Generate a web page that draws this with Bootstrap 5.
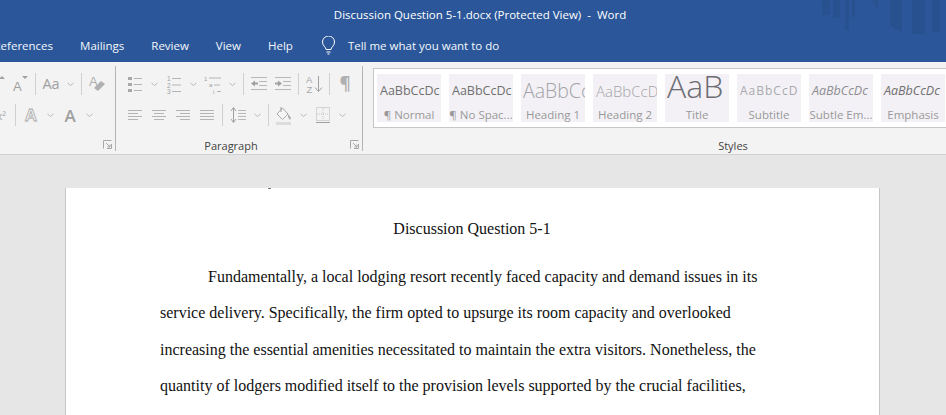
<!DOCTYPE html>
<html lang="en">
<head>
  <meta charset="UTF-8" />
  <title>Discussion Question 5-1.docx (Protected View) - Word</title>
  <link href="https://cdn.jsdelivr.net/npm/bootstrap@5.3.0/dist/css/bootstrap.min.css" rel="stylesheet"/>
  <style>
    html, body { height: 415px; overflow: hidden; }
    body { font-family: "Open Sans", "Noto Sans", sans-serif; background: #e6e6e6; }
    .word-top { background: #2b579a; color: #fff; height: 62px; }
    .title-line { height: 30px; font-size: 11.5px; padding-left: 14px; }
    .watermark { top: 0; right: 0; }
    .tab-line { height: 32px; font-size: 11.5px; margin-left: -20px; }
    .tab-item { padding: 0 13.5px; color: #f4f7fb; }
    .tell-me { margin-left: 15px; gap: 11.5px; color: #f4f7fb; }
    .ribbon-bar { height: 93px; background: #f3f3f3; border-bottom: 1px solid #d2d2d2; overflow: hidden; }
    .rb-group { margin: 4px 0 3px; border-right: 1px solid #b4b4b4; flex: none; }
    .rb-font { width: 116px; }
    .rb-para { width: 247px; }
    .rb-styles { border-right: 0; margin-left: 10px; width: 720px; }
    .tool-row { height: 22px; margin-top: 7px; }
    .tool-row + .tool-row { margin-top: 9px; }
    .tools-end { justify-content: flex-end; padding-right: 6px; }
    .tools-end2 { padding-right: 18px; }
    .tools-start { padding-left: 7px; }
    .rb-tool { width: 24px; flex: none; color: #a8a8a8; }
    .rb-drop { width: 15px; flex: none; }
    .rb-sep { width: 1px; height: 22px; background: #d0d0d0; margin: 0 3px; flex: none; }
    .rb-label { height: 18px; margin-top: auto; margin-bottom: -4px; font-size: 11px; color: #444; line-height: 18px; }
    .para-label { padding-right: 16px; }
    .launcher { right: 3px; bottom: 2px; }
    .txt-tool { font-size: 14.5px; color: #a0a0a0; line-height: 1; }
    .sup-tool { font-size: 11px; padding-right: 6px; }
    .big-a { font-size: 17px; font-weight: 600; }
    .pil-tool { font-size: 17px; font-weight: 700; color: #b0b0b0; }
    .gallery { margin-top: 2px; height: 60px; background: #fff; border: 1px solid #c6c6c6; border-right: 0; padding: 5px 3px; gap: 8px; }
    .style-tile { width: 64px; height: 48px; flex: none; background: #f3f1f5; overflow: hidden; }
    .tile-prev { height: 32px; white-space: nowrap; overflow: hidden; font-size: 12.5px; color: #6f6f6f; line-height: 34px; padding-left: 3px; }
    .tile-name { font-size: 11.5px; color: #999; line-height: 17px; white-space: nowrap; }
    .prev-h1 { font-size: 19.5px; font-weight: 300; color: #a3a3a8; padding-left: 2px; }
    .prev-h2 { font-size: 15px; font-weight: 300; color: #a3a3a8; padding-left: 3px; }
    .prev-title { font-size: 32px; font-weight: 300; color: #6c6c72; line-height: 23px; padding-left: 2px; }
    .prev-sub { letter-spacing: 1px; color: #a9a9ae; font-size: 12px; }
    .prev-em { font-style: italic; color: #8d8d92; }
    .prev-emph { font-style: italic; color: #6f6f6f; }
    .doc-area { padding-top: 33px; }
    .doc-page { margin-left: 65px; width: 815px; height: 227px; background: #fff; border: solid #c6c6c6; border-width: 0 1px; padding: 23px 95px 0 94px; font-family: "Liberation Serif", "Times New Roman", serif; font-size: 16px; line-height: 36.6px; color: #111; overflow: hidden; }
    .doc-title { margin: 0 0 11px; }
    .doc-para { text-indent: 48px; margin: 0; }
    .cut-mark { top: 0; left: 202px; width: 3px; height: 1px; background: #777; }
  </style>
</head>
<body>
  <!-- icons used by the ribbon -->
  <svg class="d-none">
    <symbol id="i-chev" viewBox="0 0 15 22"><path d="M4.5 10l3 2.5 3-2.5" fill="none" stroke="#b8b8b8"/></symbol>
    <symbol id="i-grow" viewBox="0 0 24 22">
      <text x="5" y="18" font-family="Liberation Sans" font-size="14" fill="#a0a0a0">A</text>
      <path d="M15 6l3-3 3 3z" fill="#a0a0a0"/>
    </symbol>
    <symbol id="i-shrink" viewBox="0 0 24 22">
      <text x="5" y="18" font-family="Liberation Sans" font-size="13" fill="#a0a0a0">A</text>
      <path d="M14 3h6l-3 3z" fill="#a0a0a0"/>
    </symbol>
    <symbol id="i-bul" viewBox="0 0 24 22" fill="#a8a8a8">
      <rect x="5" y="4" width="4" height="3"/><rect x="5" y="10" width="4" height="3"/><rect x="5" y="16" width="4" height="3"/>
      <path d="M11 5.5h8M11 11.5h8M11 17.5h8" stroke="#b4b4b4" fill="none"/>
    </symbol>
    <symbol id="i-num" viewBox="0 0 24 22">
      <g font-family="Liberation Sans" font-size="6.5" fill="#a0a0a0"><text x="5" y="8">1</text><text x="5" y="14.5">2</text><text x="5" y="21">3</text></g>
      <path d="M10 5.5h9M10 12h9M10 18.5h9" stroke="#b4b4b4" fill="none"/>
    </symbol>
    <symbol id="i-multi" viewBox="0 0 24 22">
      <g font-family="Liberation Sans" font-size="6" fill="#a0a0a0"><text x="3" y="8">1</text><text x="8" y="14">a</text><text x="12" y="20.5">i</text></g>
      <path d="M8 5h12M13 12h6M16 18.5h4" stroke="#b4b4b4" fill="none"/>
    </symbol>
    <symbol id="i-out" viewBox="0 0 24 22">
      <path d="M4 4.500h16M12 8.500h8M12 12.500h8M4 16.500h16" stroke="#b8b8b8" fill="none"/>
      <path d="M4 10.500l4-3v2h3v2H8v2z" fill="#a0a0a0"/>
    </symbol>
    <symbol id="i-in" viewBox="0 0 24 22">
      <path d="M4 4.500h16M12 8.500h8M12 12.500h8M4 16.500h16" stroke="#b8b8b8" fill="none"/>
      <path d="M11 10.500l-4-3v2H4v2h3v2z" fill="#a0a0a0"/>
    </symbol>
    <symbol id="i-sort" viewBox="0 0 24 22">
      <g font-family="Liberation Sans" font-size="9.500" fill="#a8a8a8"><text x="4" y="10">A</text><text x="4.500" y="20">Z</text></g>
      <path d="M16.500 3v15M13 14.500l3.500 4 3.500-4" stroke="#a0a0a0" fill="none"/>
    </symbol>
    <symbol id="i-left" viewBox="0 0 24 22"><path d="M5 6.500h14M5 9.500h10M5 12.500h14M5 15.500h10" stroke="#b4b4b4" fill="none"/></symbol>
    <symbol id="i-mid" viewBox="0 0 24 22"><path d="M5 6.500h14M7 9.500h10M5 12.500h14M7 15.500h10" stroke="#b4b4b4" fill="none"/></symbol>
    <symbol id="i-right" viewBox="0 0 24 22"><path d="M5 6.500h14M9 9.500h10M5 12.500h14M9 15.500h10" stroke="#b4b4b4" fill="none"/></symbol>
    <symbol id="i-just" viewBox="0 0 24 22"><path d="M5 6.500h14M5 9.500h14M5 12.500h14M5 15.500h14" stroke="#b4b4b4" fill="none"/></symbol>
    <symbol id="i-space" viewBox="0 0 24 22">
      <path d="M7.500 4v14M5 7l2.500-3.500L10 7M5 15l2.500 3.500L10 15" stroke="#a0a0a0" fill="none"/>
      <path d="M12 6.500h8M12 9.500h8M12 12.500h8M12 15.500h8" stroke="#b8b8b8" fill="none"/>
    </symbol>
    <symbol id="i-shade" viewBox="0 0 24 22">
      <path d="M10.500 4l-5.500 6 5.500 5.500L16 10z" fill="#f6f6f6" stroke="#a8a8a8"/>
      <path d="M16 10l3 4-1 2-2-3z" fill="#a8a8a8"/>
      <path d="M9 3v5" stroke="#a0a0a0"/>
      <rect x="4" y="18" width="15" height="3" fill="#dcdcdc"/>
    </symbol>
    <symbol id="i-bord" viewBox="0 0 24 22">
      <rect x="5.500" y="3.500" width="13" height="13" fill="none" stroke="#b4b4b4" stroke-dasharray="1 1"/>
      <path d="M12 4v12M6 10h12" stroke="#c4c4c4" stroke-dasharray="1 1"/>
      <path d="M5 18.500h14" stroke="#a0a0a0"/>
    </symbol>
    <symbol id="i-erase" viewBox="0 0 24 22">
      <text x="4" y="13" font-family="Liberation Sans" font-size="13" fill="#b0b0b0">A</text>
      <path d="M9 15l7-7 4 3-7 7z" fill="#b0b0b0"/>
    </symbol>
    <symbol id="i-launch" viewBox="0 0 9 9">
      <path d="M.5 8.500v-8h8M8.500 4v4.500H4M3 3l4 4M7 4.500V7H4.500" fill="none" stroke="#a8a8a8"/>
    </symbol>
  </svg>

  <!-- title + tabs -->
  <div class="word-top position-relative">
    <svg class="watermark position-absolute" width="124" height="36" viewBox="0 0 124 36">
      <g fill="#285190">
        <rect x="0" width="8" height="15"/><rect x="11" width="7" height="18"/><rect x="23" width="4" height="30"/>
        <rect x="30" width="3" height="17"/><path d="M50 0h6v10z"/><path d="M68 0h12v32l-12-6z"/>
        <rect x="90" width="13" height="34"/><rect x="110" width="8" height="32"/>
      </g>
    </svg>
    <div class="title-line d-flex align-items-center position-relative">
      <span class="title-text mx-auto text-nowrap">Discussion Question 5-1.docx (Protected View)&nbsp; - &nbsp;Word</span>
    </div>
    <div class="tab-line d-flex align-items-center position-relative text-nowrap">
      <span class="tab-item">References</span>
      <span class="tab-item">Mailings</span>
      <span class="tab-item">Review</span>
      <span class="tab-item">View</span>
      <span class="tab-item">Help</span>
      <span class="tell-me d-flex align-items-center">
        <svg width="15" height="20" viewBox="0 0 15 20"><path d="M5 13.500c0-2.500-3.500-3.500-3.500-7.500a6 6 0 0 1 12 0c0 4-3.500 5-3.500 7.500zM5.500 16h4M6.500 18h2" fill="none" stroke="#fff"/></svg>
        <span>Tell me what you want to do</span>
      </span>
    </div>
  </div>

  <!-- ribbon -->
  <div class="ribbon-bar d-flex">
    <div class="rb-group rb-font d-flex flex-column position-relative">
      <div class="tool-row d-flex align-items-center tools-end">
        <svg class="rb-tool" height="22"><use href="#i-grow"/></svg>
        <svg class="rb-tool" height="22"><use href="#i-shrink"/></svg>
        <span class="rb-sep"></span>
        <span class="rb-tool txt-tool text-center">Aa</span>
        <svg class="rb-drop" height="22"><use href="#i-chev"/></svg>
        <span class="rb-sep"></span>
        <svg class="rb-tool" height="22"><use href="#i-erase"/></svg>
      </div>
      <div class="tool-row d-flex align-items-center tools-end tools-end2">
        <span class="rb-tool txt-tool sup-tool text-end">x²</span>
        <span class="rb-sep"></span>
        <svg class="rb-tool" height="22" viewBox="0 0 24 22"><text x="12" y="17" text-anchor="middle" font-family="Liberation Sans" font-weight="700" font-size="17" fill="#f6f6f6" stroke="#a8a8a8" stroke-width=".8">A</text></svg>
        <svg class="rb-drop" height="22"><use href="#i-chev"/></svg>
        <span class="rb-tool txt-tool big-a text-center">A</span>
        <svg class="rb-drop" height="22"><use href="#i-chev"/></svg>
      </div>
      <svg class="launcher position-absolute" width="9" height="9"><use href="#i-launch"/></svg>
    </div>

    <div class="rb-group rb-para d-flex flex-column position-relative">
      <div class="tool-row d-flex align-items-center tools-start">
        <svg class="rb-tool" height="22"><use href="#i-bul"/></svg>
        <svg class="rb-drop" height="22"><use href="#i-chev"/></svg>
        <svg class="rb-tool" height="22"><use href="#i-num"/></svg>
        <svg class="rb-drop" height="22"><use href="#i-chev"/></svg>
        <svg class="rb-tool" height="22"><use href="#i-multi"/></svg>
        <svg class="rb-drop" height="22"><use href="#i-chev"/></svg>
        <span class="rb-sep"></span>
        <svg class="rb-tool" height="22"><use href="#i-out"/></svg>
        <svg class="rb-tool" height="22"><use href="#i-in"/></svg>
        <span class="rb-sep"></span>
        <svg class="rb-tool" height="22"><use href="#i-sort"/></svg>
        <span class="rb-sep"></span>
        <span class="rb-tool pil-tool text-center">¶</span>
      </div>
      <div class="tool-row d-flex align-items-center tools-start">
        <svg class="rb-tool" height="22"><use href="#i-left"/></svg>
        <svg class="rb-tool" height="22"><use href="#i-mid"/></svg>
        <svg class="rb-tool" height="22"><use href="#i-right"/></svg>
        <svg class="rb-tool" height="22"><use href="#i-just"/></svg>
        <span class="rb-sep"></span>
        <svg class="rb-tool" height="22"><use href="#i-space"/></svg>
        <svg class="rb-drop" height="22"><use href="#i-chev"/></svg>
        <span class="rb-sep"></span>
        <svg class="rb-tool" height="22"><use href="#i-shade"/></svg>
        <svg class="rb-drop" height="22"><use href="#i-chev"/></svg>
        <svg class="rb-tool" height="22"><use href="#i-bord"/></svg>
        <svg class="rb-drop" height="22"><use href="#i-chev"/></svg>
      </div>
      <div class="rb-label para-label text-center">Paragraph</div>
      <svg class="launcher position-absolute" width="9" height="9"><use href="#i-launch"/></svg>
    </div>

    <div class="rb-group rb-styles d-flex flex-column">
      <div class="gallery d-flex">
        <div class="style-tile text-center"><div class="tile-prev text-start">AaBbCcDc</div><div class="tile-name">¶ Normal</div></div>
        <div class="style-tile text-center"><div class="tile-prev text-start">AaBbCcDc</div><div class="tile-name">¶ No Spac...</div></div>
        <div class="style-tile text-center"><div class="tile-prev prev-h1 text-start">AaBbCc</div><div class="tile-name">Heading 1</div></div>
        <div class="style-tile text-center"><div class="tile-prev prev-h2 text-start">AaBbCcD</div><div class="tile-name">Heading 2</div></div>
        <div class="style-tile text-center"><div class="tile-prev prev-title text-start">AaB</div><div class="tile-name">Title</div></div>
        <div class="style-tile text-center"><div class="tile-prev prev-sub text-start">AaBbCcD</div><div class="tile-name">Subtitle</div></div>
        <div class="style-tile text-center"><div class="tile-prev prev-em text-start">AaBbCcDc</div><div class="tile-name">Subtle Em...</div></div>
        <div class="style-tile text-center"><div class="tile-prev prev-emph text-start">AaBbCcDc</div><div class="tile-name">Emphasis</div></div>
      </div>
      <div class="rb-label text-center">Styles</div>
    </div>
  </div>

  <!-- document -->
  <div class="doc-area">
    <div class="doc-page position-relative">
      <span class="cut-mark position-absolute"></span>
      <p class="doc-title text-center">Discussion Question 5-1</p>
      <p class="doc-para">Fundamentally, a local lodging resort recently faced capacity and demand issues in its service delivery. Specifically, the firm opted to upsurge its room capacity and overlooked increasing the essential amenities necessitated to maintain the extra visitors. Nonetheless, the quantity of lodgers modified itself to the provision levels supported by the crucial facilities,</p>
    </div>
  </div>
</body>
</html>
